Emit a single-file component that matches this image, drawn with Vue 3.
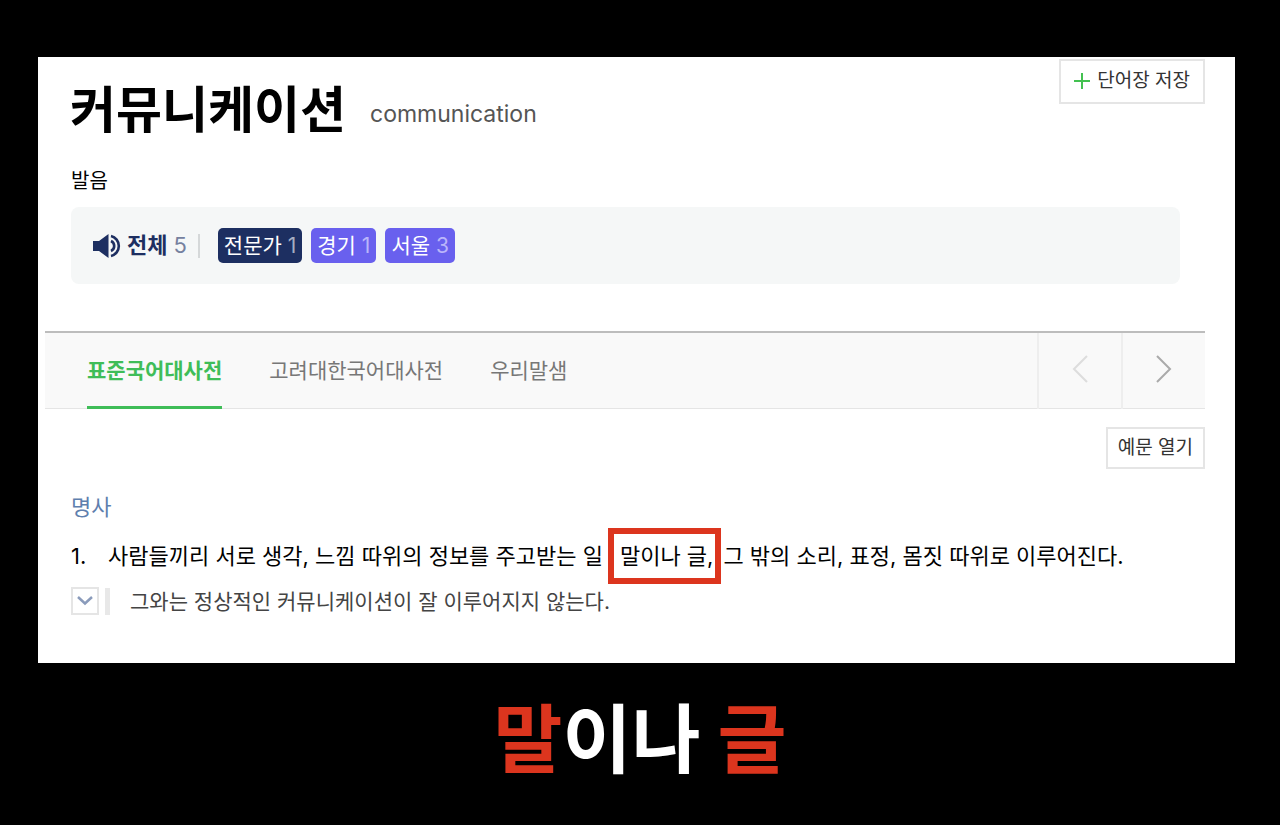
<template>
  <div class="page">
    <main class="card">
      <header class="word-header">
        <div class="word-title">
          <h1>커뮤니케이션</h1>
          <span class="origin">communication</span>
        </div>
        <button type="button" class="save-button">
          <svg width="16" height="16" viewBox="0 0 16 16" aria-hidden="true">
            <path d="M8 0V16M0 8H16" stroke="#43c151" stroke-width="2" />
          </svg>
          단어장 저장
        </button>
      </header>

      <section class="pron">
        <h2>발음</h2>
        <div class="pron-box">
          <button type="button" class="pron-all">
            <svg width="28" height="24" viewBox="0 0 28 24" aria-hidden="true">
              <path d="M0 7H6L15.500 0V24L6 17H0Z" fill="#1d2f61" />
              <path d="M18 7A5.500 5.500 0 0 1 18 17" fill="none" stroke="#1d2f61" stroke-width="2.600" />
              <path d="M18 2A10.300 10.300 0 0 1 18 22" fill="none" stroke="#1d2f61" stroke-width="2.600" />
            </svg>
            <strong>전체</strong>
            <span>5</span>
          </button>
          <span class="divider"></span>
          <div class="pron-list">
            <button
              v-for="item in prons"
              :key="item.name"
              type="button"
              class="pron-item"
              :class="{ expert: item.expert }"
            >
              {{ item.name }} <span>{{ item.count }}</span>
            </button>
          </div>
        </div>
      </section>

      <nav class="tabs">
        <div class="tab-list">
          <button
            v-for="(tab, index) in tabs"
            :key="tab"
            type="button"
            class="tab"
            :class="{ active: index === current }"
            @click="current = index"
          >
            {{ tab }}
          </button>
        </div>
        <button type="button" class="arrow" aria-label="이전" :disabled="current === 0" @click="current--">
          <svg width="16" height="28" viewBox="0 0 16 28" aria-hidden="true">
            <path d="M15 1L2 14L15 27" fill="none" stroke="currentColor" stroke-width="2" />
          </svg>
        </button>
        <button type="button" class="arrow" aria-label="다음" :disabled="current === tabs.length - 1" @click="current++">
          <svg width="16" height="28" viewBox="0 0 16 28" aria-hidden="true">
            <path d="M1 1L14 14L1 27" fill="none" stroke="currentColor" stroke-width="2" />
          </svg>
        </button>
      </nav>

      <div class="tools">
        <button type="button" class="example-button">예문 열기</button>
      </div>

      <section class="meaning">
        <h3>명사</h3>
        <div class="definition">
          <span class="number">1.</span>
          <p>사람들끼리 서로 생각, 느낌 따위의 정보를 주고받는 일<mark>말이나 글,</mark>그 밖의 소리, 표정, 몸짓 따위로 이루어진다.</p>
        </div>
        <div class="example">
          <button type="button" class="fold" aria-label="예문 펼치기">
            <svg width="16" height="10" viewBox="0 0 16 10" aria-hidden="true">
              <path d="M1 1L8 7.500L15 1" fill="none" stroke="#8a9bbb" stroke-width="2.500" />
            </svg>
          </button>
          <p>그와는 정상적인 커뮤니케이션이 잘 이루어지지 않는다.</p>
        </div>
      </section>
    </main>

    <p class="caption"><em>말</em>이나 <em>글</em></p>
  </div>
</template>

<script setup>
import { ref } from 'vue'

const current = ref(0)
const tabs = ['표준국어대사전', '고려대한국어대사전', '우리말샘']
const prons = [
  { name: '전문가', count: 1, expert: true },
  { name: '경기', count: 1 },
  { name: '서울', count: 3 }
]
</script>

<style>
body {
  margin: 0;
  background: #000;
}
</style>

<style scoped>
.page {
  box-sizing: border-box;
  min-height: 100vh;
  padding: 57px 0 24px;
  background: #000;
  font-family: Inter, "Noto Sans CJK KR", sans-serif;
  color: #000;
}

h1, h2, h3, p {
  margin: 0;
}

button {
  padding: 0;
  border: none;
  background: none;
  font-family: inherit;
  cursor: pointer;
}

.card {
  margin: 0 45px 0 38px;
  padding: 2px 30px 48px 7px;
  background: #fff;
}

/* 표제어 */
.word-header {
  display: flex;
  justify-content: space-between;
  align-items: flex-start;
  padding-left: 25px;
}

.word-title {
  display: flex;
  align-items: flex-end;
  gap: 24px;
  padding-top: 15px;
}

h1 {
  font-size: 50px;
  line-height: 72px;
  font-weight: 700;
}

.origin {
  margin-bottom: 16px;
  font-size: 23px;
  line-height: 32px;
  color: #555;
}

.save-button, .example-button {
  display: flex;
  justify-content: center;
  align-items: center;
  border: 2px solid #e5e5e5;
  font-size: 19px;
  line-height: 28px;
  color: #333;
}

.save-button {
  gap: 7px;
  padding: 6px 13px 7px;
}

/* 발음 */
.pron {
  padding: 20px 25px 0 26px;
}

h2 {
  font-size: 20px;
  line-height: 30px;
  font-weight: 400;
}

.pron-box {
  display: flex;
  align-items: center;
  margin-top: 11px;
  padding: 20px 22px;
  border-radius: 8px;
  background: #f5f7f7;
}

.pron-all {
  display: flex;
  align-items: center;
  gap: 6px;
  font-size: 22px;
  line-height: 37px;
  color: #1d2f61;
}

.pron-all span {
  color: #75819f;
}

.divider {
  width: 2px;
  height: 24px;
  margin: 0 18px 0 11px;
  background: #d5d8d9;
}

.pron-list {
  display: flex;
  gap: 9px;
}

.pron-item {
  padding: 0 6px;
  border-radius: 5px;
  background: #6960ee;
  font-size: 21px;
  line-height: 35px;
  color: #fff;
}

.pron-item span {
  color: #bab5fa;
}

.pron-item.expert {
  background: #1d2f61;
}

.pron-item.expert span {
  color: #a5adc1;
}

/* 사전 탭 */
.tabs {
  display: flex;
  margin-top: 47px;
  border-top: 2px solid #bdbdbd;
  background: #f9f9f9;
  box-shadow: inset 0 -1px #e5e5e5;
}

.tab-list {
  display: flex;
  flex: 1;
  gap: 47px;
  padding-left: 42px;
}

.tab {
  padding-top: 2px;
  border-bottom: 3px solid transparent;
  font-size: 21px;
  line-height: 71px;
  color: #777;
}

.tab.active {
  border-color: #3fbd58;
  font-weight: 700;
  color: #3fbd58;
}

.arrow {
  display: flex;
  justify-content: center;
  align-items: center;
  width: 84px;
  padding-bottom: 4px;
  border-left: 2px solid #eee;
  color: #aaa;
}

.arrow:disabled {
  color: #ddd;
  cursor: default;
}

.tools {
  display: flex;
  justify-content: flex-end;
  margin-top: 18px;
}

.example-button {
  padding: 5px 10px;
}

/* 뜻풀이 */
.meaning {
  padding: 20px 0 0 26px;
}

h3 {
  font-size: 22px;
  line-height: 36px;
  font-weight: 400;
  color: #5f7fae;
}

.definition {
  display: flex;
  margin-top: 2px;
  font-size: 22px;
  line-height: 58px;
}

.number {
  width: 37px;
}

mark {
  margin: 0 2px 0 5px;
  padding: 9px 2px 9px 6px;
  border: 6px solid #dc351e;
  background: none;
  color: inherit;
}

.example {
  display: flex;
  align-items: center;
  margin-top: 2px;
}

.fold {
  display: flex;
  justify-content: center;
  align-items: center;
  width: 28px;
  height: 28px;
  border: 2px solid #e5e5e5;
}

.example p {
  margin-left: 6px;
  padding-left: 20px;
  border-left: 5px solid #e8e8e8;
  font-size: 21px;
  line-height: 27px;
  color: #444;
}

/* 하단 자막 */
.caption {
  margin-top: 20px;
  font-family: "Noto Sans CJK KR", sans-serif;
  font-size: 75px;
  line-height: 104px;
  font-weight: 700;
  text-align: center;
  color: #fff;
}

.caption em {
  font-style: normal;
  color: #dc351e;
}
</style>
